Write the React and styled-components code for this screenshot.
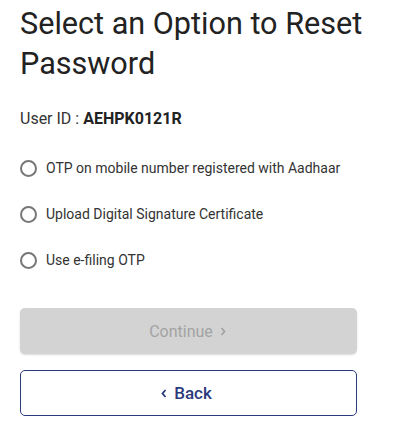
import React from 'react';
import styled, { createGlobalStyle } from 'styled-components';

const GlobalStyle = createGlobalStyle`
  body {
    margin: 0;
    background: #fff;
    font-family: Roboto, "Liberation Sans", sans-serif;
  }
`;

const Page = styled.div`
  padding: 0 20px;
  width: 377px;
`;

const Title = styled.h1`
  margin: 0;
  padding-top: 4px;
  font-size: 30.6px;
  line-height: 40px;
  font-weight: 400;
  color: #222;
`;

const UserLine = styled.div`
  margin-top: 25px;
  font-size: 16px;
  line-height: 20px;
  color: #333;

  b {
    font-weight: 700;
    color: #222;
  }
`;

const Options = styled.div`
  margin-top: 29px;
  display: flex;
  flex-direction: column;
  gap: 26px;
`;

const Option = styled.label`
  display: flex;
  align-items: center;
  gap: 9px;
  font-size: 14px;
  line-height: 20px;
  color: #333;
  cursor: pointer;
`;

const Radio = styled.span`
  width: 17px;
  height: 17px;
  box-sizing: border-box;
  border: 2px solid #777;
  border-radius: 50%;
  flex-shrink: 0;
`;

const Button = styled.button`
  display: flex;
  align-items: center;
  justify-content: center;
  gap: 7px;
  width: 337px;
  height: 46px;
  box-sizing: border-box;
  border-radius: 5px;
  font-family: Roboto, "Liberation Sans", sans-serif;
  font-size: 16px;
  font-weight: 400;
`;

const ContinueButton = styled(Button)`
  margin-top: 38px;
  background: #d3d3d3;
  color: #a3a3a3;
  border: none;
  box-shadow: 0 1px 2px rgba(0, 0, 0, 0.15);
  padding-right: 8px;
`;

const BackButton = styled(Button)`
  margin-top: 16px;
  background: #fff;
  color: #2b3a7c;
  border: 1px solid #2b3a7c;
  font-size: 17px;
  font-weight: 500;
  padding-right: 10px;
`;

const Chevron = ({ dir }) => (
  <svg width="6" height="9" viewBox="0 0 6 9" fill="none">
    <path
      d={dir === 'left' ? 'M4.5 1L1.5 4.5L4.5 8' : 'M1.5 1L4.5 4.5L1.5 8'}
      stroke="currentColor"
      strokeWidth="1.8"
    />
  </svg>
);

const options = [
  'OTP on mobile number registered with Aadhaar',
  'Upload Digital Signature Certificate',
  'Use e-filing OTP',
];

export default function App() {
  return (
    <>
      <GlobalStyle />
      <Page>
        <Title>Select an Option to Reset Password</Title>
        <UserLine>
          User ID : <b>AEHPK0121R</b>
        </UserLine>
        <Options>
          {options.map((o) => (
            <Option key={o}>
              <Radio />
              {o}
            </Option>
          ))}
        </Options>
        <ContinueButton disabled>
          Continue <Chevron dir="right" />
        </ContinueButton>
        <BackButton>
          <Chevron dir="left" /> Back
        </BackButton>
      </Page>
    </>
  );
}
